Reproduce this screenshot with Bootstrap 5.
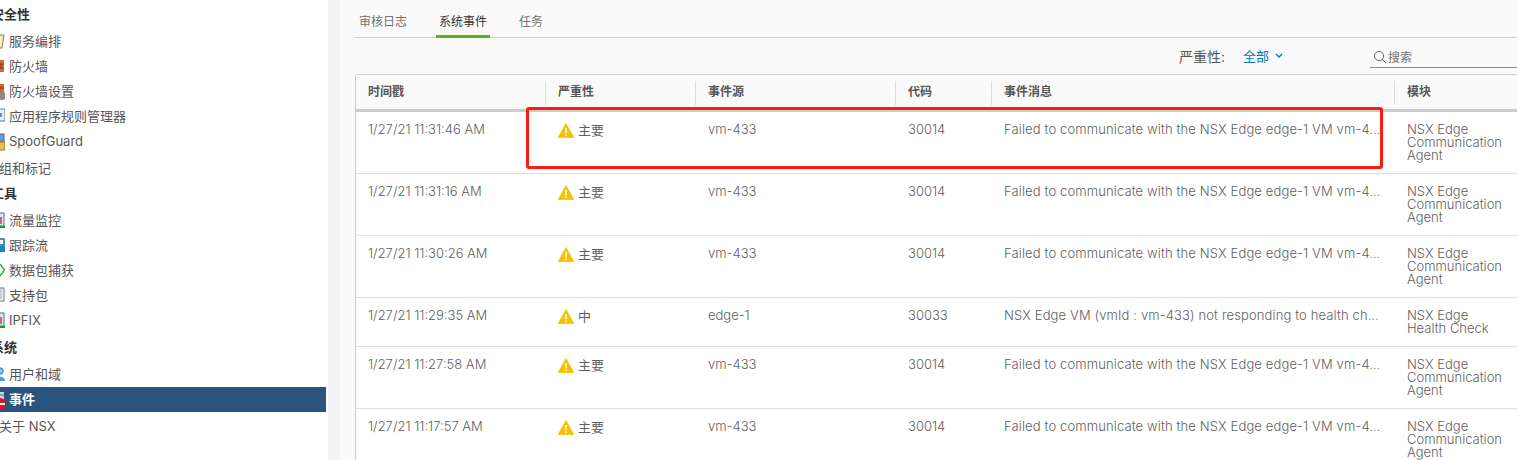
<!DOCTYPE html>
<html lang="zh">
<head>
<meta charset="utf-8">
<title>系统事件</title>
<link href="https://cdn.jsdelivr.net/npm/bootstrap@5.3.0/dist/css/bootstrap.min.css" rel="stylesheet">
<style>
html,body{height:460px;overflow:hidden}
body{font-family:"Inter","Noto Sans CJK SC",sans-serif;background:#fafafa;color:#565656;font-size:13px}
.shell{height:460px;position:relative}
.side{width:328px;flex:none;background:#fff;height:460px;overflow:hidden}
.gutter{width:12px;flex:none;background:#f4f4f4}
.sec{height:25px;line-height:25px;font-weight:700;color:#333;font-size:13px;margin-left:-9px;margin-bottom:2px;white-space:nowrap}
.itm{height:25px;line-height:25px;display:flex;align-items:center;padding-left:9px;position:relative;color:#565656;white-space:nowrap}
.itm svg{position:absolute;left:-9px;top:4px}
.itm.on{background:#2b537f;color:#fff;font-weight:700;width:326px}
.plain{margin-left:-1px;margin-top:2px;height:25px;line-height:25px;color:#565656}
.main{flex:1;min-width:0;padding-left:15px;overflow:hidden}
.tabsline{height:38px;border-bottom:1px solid #ccc;padding-left:4px}
.tabx{height:38px;line-height:44px;font-size:12px;color:#737373;margin-right:32px}
.tabx.on{color:#333;border-bottom:3px solid #5eb115;padding:0 3px;margin-left:-3px;margin-right:29px}
.filt{height:36px;display:flex;align-items:center;justify-content:flex-end}
.flab{font-size:14px;color:#565656;margin-right:18px}
.fval{color:#0079b8;font-size:13px;margin-right:6px;padding-top:1px}
.srch{width:147px;height:20px;border-bottom:1px solid #8c8c8c;margin-left:87px;margin-top:3px;color:#737373;font-size:12px;line-height:19px;display:flex;align-items:center;gap:1px;padding-left:3px}
.gridbox{width:1162px;background:#fff;border:1px solid #ccc;border-right:0;border-bottom:0;border-radius:3px 0 0 0}
.tbl{table-layout:fixed;width:1162px;margin:0;border-collapse:separate;border-spacing:0;--bs-table-bg:transparent}
.tbl th{height:37px;padding:0 12px;font-weight:700;font-size:12px;color:#565656;background:#fafafa;border-bottom:3px solid #ccc;vertical-align:middle;position:relative}
.tbl th+th::before{content:"";position:absolute;left:-1px;top:6px;height:24px;width:1px;background:#ddd}
.tbl td{padding:11px 12px 0;font-size:13px;line-height:13px;font-weight:300;color:#5f5f5f;border-bottom:1px solid #ddd;vertical-align:top;white-space:nowrap;overflow:hidden;background:#fff}
.tbl td.md{white-space:normal}
.tbl td.msg{letter-spacing:.13px}
.tbl tr.h3 td{height:62px}
.tbl tr.h2 td{height:49px}
.sev{display:flex;align-items:center;gap:4px;color:#5f5f5f;font-weight:400}
.redbox{position:absolute;left:526px;top:107px;width:857px;height:62px;border:3px solid #fb1c10;border-radius:3px;pointer-events:none}
</style>
</head>
<body>
<svg width="0" height="0" class="position-absolute">
<defs>
<symbol id="warn" viewBox="0 0 16 15"><path d="M8 .6 15.8 14.6H.2Z" fill="#f9c000" stroke="#f9c000" stroke-width=".8" stroke-linejoin="round"/><rect x="7.2" y="5" width="1.6" height="5.4" fill="#fff"/><rect x="7.2" y="11.4" width="1.6" height="1.7" fill="#fff"/></symbol>
<symbol id="scr" viewBox="0 0 14 16"><rect x="1" y="1" width="12" height="13" fill="#dfe6ef" stroke="#53708f"/><rect x="3" y="5" width="8" height="7" fill="#c96a6a"/><rect x="5" y="14" width="9" height="2" fill="#11a321"/></symbol>
</defs>
</svg>
<div class="shell d-flex">
  <nav class="side">
    <div class="sec" style="margin-top:2px">安全性</div>
    <div class="itm"><svg width="14" height="16" viewBox="0 0 14 16"><path d="M1 2h12l-2 13H4Z" fill="#f4edc8" stroke="#8c7a3a"/></svg>服务编排</div>
    <div class="itm"><svg width="14" height="16" viewBox="0 0 14 16"><rect x="1" y="2" width="12" height="12" fill="#d9692a"/><path d="M1 6h12M1 10h12M7 2v4M4 6v4M10 6v4" stroke="#7a3a14"/></svg>防火墙</div>
    <div class="itm"><svg width="14" height="18" viewBox="0 0 14 18"><rect x="1" y="1" width="12" height="10" fill="#cf6a2e"/><path d="M1 5h12M7 1v4" stroke="#7a3a14"/><circle cx="11" cy="13" r="4" fill="#8a8a8a"/></svg>防火墙设置</div>
    <div class="itm"><svg width="14" height="16" viewBox="0 0 14 16"><rect x="1" y="1" width="13" height="12" fill="#e6eef7" stroke="#5b7fa6"/><rect x="5" y="5" width="6" height="4" fill="#6f93b8"/></svg>应用程序规则管理器</div>
    <div class="itm"><svg width="14" height="18" viewBox="0 0 14 18"><rect x="4" y="1" width="9" height="8" fill="#6d9ac9" stroke="#3f6a96"/><rect x="3" y="9" width="11" height="8" fill="#eac24f" stroke="#9a7a20"/></svg>SpoofGuard</div>
    <div class="plain">组和标记</div>
    <div class="sec">工具</div>
    <div class="itm"><svg width="14" height="16"><use href="#scr"/></svg>流量监控</div>
    <div class="itm"><svg width="14" height="16" viewBox="0 0 14 16"><rect x="5" y="2" width="8" height="6" fill="#fff" stroke="#1a6a9a" stroke-width="1.5"/><rect x="2" y="9" width="12" height="6" fill="#1a87b8"/></svg>跟踪流</div>
    <div class="itm"><svg width="14" height="16" viewBox="0 0 14 16"><path d="M9 2l4.5 6L9 14" fill="none" stroke="#2ea84a" stroke-width="1.4"/><path d="M5 8h4" stroke="#2ea84a"/></svg>数据包捕获</div>
    <div class="itm"><svg width="14" height="16" viewBox="0 0 14 16"><rect x="3" y="1" width="10" height="13" fill="#eef1f4" stroke="#6c7c8c"/><rect x="6" y="3" width="4" height="8" fill="#fff" stroke="#9aa7b4"/></svg>支持包</div>
    <div class="itm"><svg width="14" height="16"><use href="#scr"/></svg>IPFIX</div>
    <div class="sec" style="margin-top:2px">系统</div>
    <div class="itm"><svg width="14" height="16" viewBox="0 0 14 16"><circle cx="9" cy="5" r="3.2" fill="#8cc0f0" stroke="#2a78d0"/><path d="M3 15c0-6 11-6 11 0Z" fill="#4a98e8"/></svg>用户和域</div>
    <div class="itm on"><svg width="14" height="20" viewBox="0 0 14 20"><rect x="1" y="1" width="12" height="12" fill="#c6d3e2"/><path d="M1 4h12" stroke="#54708e"/><circle cx="9" cy="13" r="6" fill="#e01320"/><rect x="4" y="12" width="10" height="2" fill="#fff"/></svg>事件</div>
    <div class="plain">关于 NSX</div>
  </nav>
  <div class="gutter"></div>
  <main class="main">
    <div class="tabsline d-flex">
      <div class="tabx">审核日志</div>
      <div class="tabx on">系统事件</div>
      <div class="tabx">任务</div>
    </div>
    <div class="filt">
      <span class="flab">严重性:</span>
      <span class="fval">全部</span>
      <svg width="8" height="6" viewBox="0 0 8 6"><path d="M1 1l3 3 3-3" fill="none" stroke="#0079b8" stroke-width="1.3"/></svg>
      <div class="srch"><svg width="14" height="14" viewBox="0 0 14 14"><circle cx="6" cy="6" r="4.6" fill="none" stroke="#666"/><path d="M9.4 9.4l3.6 3.6" stroke="#666"/></svg>搜索</div>
    </div>
    <div class="gridbox">
      <table class="table tbl">
        <colgroup><col style="width:190px"><col style="width:150px"><col style="width:200px"><col style="width:96px"><col style="width:403px"><col style="width:123px"></colgroup>
        <thead><tr><th>时间戳</th><th>严重性</th><th>事件源</th><th>代码</th><th>事件消息</th><th>模块</th></tr></thead>
        <tbody>
          <tr class="h3"><td>1/27/21 11:31:46 AM</td><td><div class="sev"><svg width="16" height="15"><use href="#warn"/></svg>主要</div></td><td>vm-433</td><td>30014</td><td class="msg">Failed to communicate with the NSX Edge edge-1 VM vm-4…</td><td class="md">NSX Edge Communication Agent</td></tr>
          <tr class="h3"><td>1/27/21 11:31:16 AM</td><td><div class="sev"><svg width="16" height="15"><use href="#warn"/></svg>主要</div></td><td>vm-433</td><td>30014</td><td class="msg">Failed to communicate with the NSX Edge edge-1 VM vm-4…</td><td class="md">NSX Edge Communication Agent</td></tr>
          <tr class="h3"><td>1/27/21 11:30:26 AM</td><td><div class="sev"><svg width="16" height="15"><use href="#warn"/></svg>主要</div></td><td>vm-433</td><td>30014</td><td class="msg">Failed to communicate with the NSX Edge edge-1 VM vm-4…</td><td class="md">NSX Edge Communication Agent</td></tr>
          <tr class="h2"><td>1/27/21 11:29:35 AM</td><td><div class="sev"><svg width="16" height="15"><use href="#warn"/></svg>中</div></td><td>edge-1</td><td>30033</td><td class="msg">NSX Edge VM (vmId : vm-433) not responding to health ch…</td><td class="md">NSX Edge<br>Health Check</td></tr>
          <tr class="h3"><td>1/27/21 11:27:58 AM</td><td><div class="sev"><svg width="16" height="15"><use href="#warn"/></svg>主要</div></td><td>vm-433</td><td>30014</td><td class="msg">Failed to communicate with the NSX Edge edge-1 VM vm-4…</td><td class="md">NSX Edge Communication Agent</td></tr>
          <tr class="h3"><td>1/27/21 11:17:57 AM</td><td><div class="sev"><svg width="16" height="15"><use href="#warn"/></svg>主要</div></td><td>vm-433</td><td>30014</td><td class="msg">Failed to communicate with the NSX Edge edge-1 VM vm-4…</td><td class="md">NSX Edge Communication Agent</td></tr>
        </tbody>
      </table>
    </div>
  </main>
  <div class="redbox"></div>
</div>
<script src="https://cdn.jsdelivr.net/npm/bootstrap@5.3.0/dist/js/bootstrap.bundle.min.js"></script>
</body>
</html>
